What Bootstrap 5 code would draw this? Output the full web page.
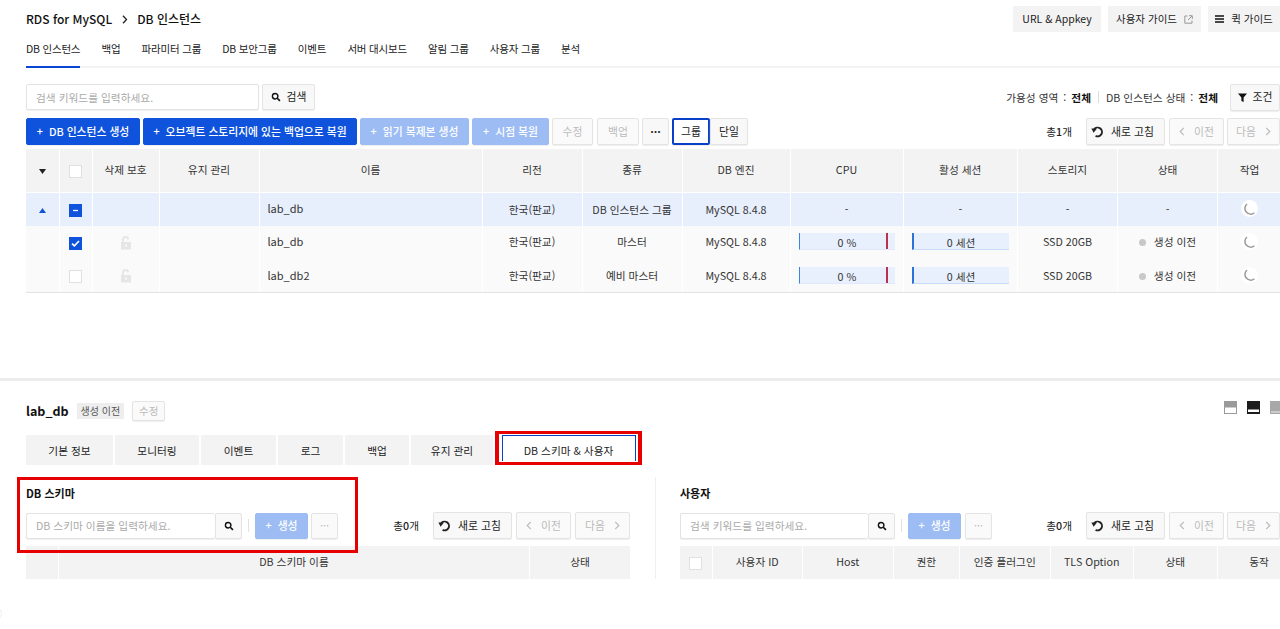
<!DOCTYPE html>
<html lang="ko">
<head>
<meta charset="utf-8">
<title>RDS for MySQL</title>
<link href="https://cdn.jsdelivr.net/npm/bootstrap@5.3.0/dist/css/bootstrap.min.css" rel="stylesheet">
<style>
html,body{height:629px;overflow:hidden}
body{font-family:"Noto Sans CJK KR","Noto Sans",sans-serif;font-size:10.7px;color:#222;background:#fff;line-height:1.4}
.upper{height:381px;border-bottom:3px solid #ececec;padding-left:26px}
.topbar{height:33px;padding-top:6px}
.crumb{font-size:12px;font-weight:500;color:#111;height:26px;margin-top:0}
.crumb svg{margin:0 9px 0 10px}
.topacts{gap:7px}
.gbtn{height:26px;background:#f3f3f3;border:0;border-radius:0;font-size:10.5px;color:#222;padding:0;display:flex;align-items:center;justify-content:center;gap:7px}
.g1{width:88px}.g2{width:93px}.g3{width:72px}
.menubar{height:35px;border-bottom:2px solid #f3f3f3}
.menuitem{display:block;padding-top:9px;height:35px;color:#222;text-decoration:none;margin-right:21.2px;font-size:10.5px;letter-spacing:-.2px}
.menuitem.on{border-bottom:2px solid #0a46d6}
.searchrow{margin-top:16px;height:26px}
.inp{border:1px solid #e3e3e3;border-radius:2px;background:#fff;color:#aaa;font-size:10.7px;height:26px;padding:0 9px;display:flex;align-items:center;box-shadow:0 1px 1px #f0f0f0}
.inp-a{width:233px}.inp-b{width:189px;border-right:0}.inp-c{width:188px;border-right:0}
.tbtn{height:27px;padding:0;font-size:10.8px;border:1px solid #e4e4e4;border-radius:2px;background:#f8f8f8;color:#222;display:inline-flex;align-items:center;justify-content:center;gap:6px;box-shadow:0 1px 1px #eee;flex:none}
.tbtn.pri{background:#0f53dc;border-color:#0f53dc;color:#fff;font-weight:500}
.tbtn.dim{background:#9dbcf4;border-color:#9dbcf4;color:#fff;font-weight:500}
.tbtn.off{color:#bbb;background:#fafafa}
.tbtn.sel{border:2px solid #0a3fc8;background:#fff}
.tbtn.rf{gap:7px;padding-right:6px}
.ml3{margin-left:3px}
.w53{width:53px}.w27{width:27px}.w114{width:114px}.w214{width:214px}.w109{width:109px}.w77{width:77px}.w41{width:41px}.w42{width:42px}.w38{width:38px}.w79{width:79px}.w55{width:55px}.w50{width:50px}.w54{width:54px}.w26{width:26px}
.h26{height:26px}
.dots3{font-weight:700}
.actionrow{margin-top:8px;height:27px}
.filt{margin-right:12px;color:#333}
.filt b{color:#111;font-weight:700}
.colon{margin:0 5px}
.vr1{width:1px;height:12px;background:#ddd;margin:0 7px}
.count{margin-right:14px;color:#222}
.count b{font-weight:500}
.grid{table-layout:fixed;border-collapse:separate;border-spacing:0;margin:0;font-size:10.7px;width:100%;--bs-table-bg:transparent;--bs-table-border-color:transparent}
.grid th,.grid td{padding:0;text-align:center;vertical-align:middle;font-weight:400;color:#333;border:0;border-right:1px solid #fff;box-shadow:none}
.grid th:last-child,.grid td:last-child{border-right:0}
.grid thead th{background:#f3f3f3;height:43.5px;border-bottom:1px solid #fff;padding-bottom:1px}
.grid tbody td{background:#fafafa;height:33.3px;padding-bottom:1px}
.grid tbody tr.hit td{background:#e7effd;padding-bottom:0}
.grid td.lft{text-align:left;padding-left:8px;font-size:11px}
.maingrid{margin-top:4px;border-bottom:1px solid #e2e2e2}
.cx{display:inline-block;width:13px;height:13px;border:1px solid #e0e0e0;background:#fff;vertical-align:middle}
.cx.blue{background:#0f53dc;border-color:#0f53dc}
.cx svg{display:block}
.gauge{display:block;height:17px;background:#e8f0fd;border-left:1px solid #3f83e0;position:relative;line-height:19px;color:#333;width:96px;border-bottom:1px solid #dfe9fb}
.gauge.ses{width:97px;border-left:2px solid #2a73d8;margin-left:8px;border-bottom-color:#c8dbf8}
.gauge::after{content:"";position:absolute}
.gauge.cpu::after{left:86px;top:0;width:2px;height:16px;background:#b8324f}
.gauge.cpu{margin-left:8px}
.dotst{display:inline-block;width:7px;height:7px;border-radius:50%;background:#c8c8c8;margin-right:8px;vertical-align:0}
.spin{display:inline-flex;width:17px;height:17px;border-radius:50%;background:#fff;align-items:center;justify-content:center}
.lower{padding:19px 0 0 26px;position:relative}
.headline{height:22px}
.dbname{font-size:12.5px;font-weight:700;color:#111;margin-right:8px}
.chipst{background:#eee;color:#555;height:16px;padding:0 4px;margin-right:8px;line-height:16px;font-size:10px}
.tbtn.small{height:20px;width:33px;font-size:10.5px}
.lay{display:flex;gap:10px;margin-right:-3px;align-self:flex-start;margin-top:1px}
.lay svg{display:block}
.tabrow{margin-top:13px;height:30px;gap:2px}
.dtab{height:30px;background:#f3f3f3;color:#222;display:flex;align-items:center;justify-content:center;flex:none;text-decoration:none}
.t1{width:87px}.t2{width:84px}.t3{width:75px}.t4{width:65px}.t5{width:64px}.t6{width:82px}
.redtab{flex:none;width:147px;height:34px;margin-top:-4px;border:3px solid #e60000;border-left-width:4px;border-right-width:4px;padding:1px 2.5px 0}
.t7{width:134px;height:26px;padding-top:4px;background:#fff;border:1px solid #0a3fc8;border-bottom:0}
.panes{margin-top:12px}
.pane-l{width:604px;flex:none;height:102px}
.pane-r{width:625px;flex:none;margin-left:25px;border-left:1px solid #f0f0f0;padding-left:24px;height:102px}
.pane-h{font-weight:700;font-size:11px;color:#111;height:35px;padding-top:8px;line-height:16px}
.sbtn{width:27px;height:26px;border:1px solid #e3e3e3;border-radius:2px;background:#f9f9f9;display:flex;align-items:center;justify-content:center;box-shadow:0 1px 1px #f0f0f0;padding:0}
.sep{width:1px;height:13px;background:#e2e2e2;margin:0 6px}
.subgrid{margin-top:7px}
.subgrid thead th{height:32.5px;border-bottom:0}
.c1{width:33.5px}.c2{width:33px}.c3{width:67px}.c4{width:100px}.c5{width:223px}.c6{width:100px}.c7{width:100px}.c8{width:108px}.c9{width:113px}.c10{width:114.5px}.c11{width:100px}.c12{width:100px}.c13{width:63px}
.s1{width:33px}.s3{width:100px}
.u1{width:32.5px}.u2{width:90.5px}.u3{width:90.5px}.u4{width:66.5px}.u5{width:90.5px}.u6{width:83.5px}.u7{width:83px}
.redbox{position:absolute;left:17px;top:96px;width:341px;height:76px;border:3px solid #e60000;pointer-events:none}
.edge{position:fixed;left:-13px;top:606px;width:15px;height:15px;border-radius:50%;border:1px solid #eee;background:#fff}
</style>
</head>
<body>
<svg width="0" height="0" class="position-absolute">
<symbol id="i-search" viewBox="0 0 12 12"><circle cx="5" cy="5" r="3.3" fill="none" stroke="#111" stroke-width="1.7"/><path d="M7.5 7.5l3.2 3.2" stroke="#111" stroke-width="2"/></symbol>
<symbol id="i-refresh" viewBox="0 0 13 13"><path d="M3.2 4.2A4.4 4.4 0 1 1 4.6 10.9" fill="none" stroke="#222" stroke-width="1.9"/><path d="M.4 3.4h5.6L2.6 7.8z" fill="#222"/></symbol>
<symbol id="i-spin" viewBox="0 0 12 12"><path d="M3 1A5 5 0 0 0 10.4 9.8" fill="none" stroke="#999" stroke-width="1.5"/></symbol>
<symbol id="i-lock" viewBox="0 0 12 14"><path d="M3 6V3.8a2.6 2.6 0 0 1 5.2-.4" fill="none" stroke="#e6e6e6" stroke-width="1.8"/><path d="M1 6h10v7.5H1z" fill="#e6e6e6"/><rect x="5.2" y="8.3" width="1.6" height="2.6" fill="#fafafa"/></symbol>
<symbol id="i-prev" viewBox="0 0 6 9"><path d="M4.8 .8L1.2 4.5l3.6 3.7" fill="none" stroke="#bbb" stroke-width="1.2"/></symbol>
<symbol id="i-next" viewBox="0 0 6 9"><path d="M1.2 .8l3.6 3.7-3.6 3.7" fill="none" stroke="#bbb" stroke-width="1.2"/></symbol>
</svg>
<div class="upper">
  <div class="topbar d-flex justify-content-between align-items-start">
    <div class="crumb d-flex align-items-center"><span>RDS for MySQL</span><svg width="6" height="9" viewBox="0 0 6 9"><path d="M1 .8l3.5 3.7L1 8.2" fill="none" stroke="#222" stroke-width="1.3"/></svg><span>DB 인스턴스</span></div>
    <div class="d-flex topacts">
      <button class="gbtn g1" type="button">URL &amp; Appkey</button>
      <button class="gbtn g2" type="button">사용자 가이드 <svg width="9" height="9" viewBox="0 0 9 9"><path d="M3.5 1H.8v7.2H8V5.5M5 .7h3.3V4M8 1L4 5" fill="none" stroke="#999" stroke-width="1"/></svg></button>
      <button class="gbtn g3" type="button"><svg width="9" height="8" viewBox="0 0 9 8"><path d="M0 1h9M0 4h9M0 7h9" stroke="#111" stroke-width="1.5"/></svg>퀵 가이드</button>
    </div>
  </div>
  <nav class="menubar d-flex">
    <a class="menuitem on" href="#">DB 인스턴스</a>
    <a class="menuitem" href="#">백업</a>
    <a class="menuitem" href="#">파라미터 그룹</a>
    <a class="menuitem" href="#">DB 보안그룹</a>
    <a class="menuitem" href="#">이벤트</a>
    <a class="menuitem" href="#">서버 대시보드</a>
    <a class="menuitem" href="#">알림 그룹</a>
    <a class="menuitem" href="#">사용자 그룹</a>
    <a class="menuitem" href="#">분석</a>
  </nav>
  <div class="searchrow d-flex align-items-center">
    <div class="inp inp-a">검색 키워드를 입력하세요.</div>
    <button class="tbtn w53 h26 ml3" type="button"><svg width="10" height="10"><use href="#i-search"/></svg>검색</button>
    <div class="ms-auto d-flex align-items-center filt">가용성 영역<span class="colon">:</span><b>전체</b><span class="vr1"></span>DB 인스턴스 상태<span class="colon">:</span><b>전체</b></div>
    <button class="tbtn w50" type="button"><svg width="9" height="9" viewBox="0 0 9 9"><path d="M0 .5h9L5.6 4.6V9L3.4 8V4.6z" fill="#111"/></svg>조건</button>
  </div>
  <div class="actionrow d-flex align-items-center">
    <button class="tbtn pri w114" type="button">+&nbsp; DB 인스턴스 생성</button>
    <button class="tbtn pri w214 ml3" type="button">+&nbsp; 오브젝트 스토리지에 있는 백업으로 복원</button>
    <button class="tbtn dim w109 ml3" type="button">+&nbsp; 읽기 복제본 생성</button>
    <button class="tbtn dim w77 ml3" type="button">+&nbsp; 시점 복원</button>
    <button class="tbtn off w41 ml3" type="button">수정</button>
    <button class="tbtn off w42 ms-1" type="button">백업</button>
    <button class="tbtn w27 ml3 dots3" type="button">···</button>
    <button class="tbtn sel w38 ml3" type="button">그룹</button>
    <button class="tbtn w38" type="button">단일</button>
    <span class="ms-auto count">총<b>1</b>개</span>
    <button class="tbtn rf w79" type="button"><svg width="13" height="13"><use href="#i-refresh"/></svg>새로 고침</button>
    <button class="tbtn off w55 ms-1" type="button"><svg width="6" height="9"><use href="#i-prev"/></svg>&nbsp;이전</button>
    <button class="tbtn off w53 ml3" type="button">다음&nbsp;<svg width="6" height="9"><use href="#i-next"/></svg></button>
  </div>
  <table class="table grid maingrid">
    <colgroup><col class="c1"><col class="c2"><col class="c3"><col class="c4"><col class="c5"><col class="c6"><col class="c7"><col class="c8"><col class="c9"><col class="c10"><col class="c11"><col class="c12"><col class="c13"></colgroup>
    <thead><tr>
      <th><svg width="7" height="5" viewBox="0 0 7 5"><path d="M0 0h7L3.5 5z" fill="#222"/></svg></th>
      <th><span class="cx"></span></th><th>삭제 보호</th><th>유지 관리</th><th>이름</th><th>리전</th><th>종류</th><th>DB 엔진</th><th>CPU</th><th>활성 세션</th><th>스토리지</th><th>상태</th><th>작업</th>
    </tr></thead>
    <tbody>
      <tr class="hit">
        <td><svg width="7" height="5" viewBox="0 0 7 5"><path d="M0 5h7L3.5 0z" fill="#0f53dc"/></svg></td>
        <td><span class="cx blue"><svg width="11" height="11" viewBox="0 0 11 11"><path d="M3 5.5h5" stroke="#fff" stroke-width="1.3"/></svg></span></td>
        <td></td><td></td><td class="lft">lab_db</td><td>한국(판교)</td><td>DB 인스턴스 그룹</td><td>MySQL 8.4.8</td><td>-</td><td>-</td><td>-</td><td>-</td>
        <td><span class="spin"><svg width="12" height="12"><use href="#i-spin"/></svg></span></td>
      </tr>
      <tr>
        <td></td>
        <td><span class="cx blue"><svg width="11" height="11" viewBox="0 0 11 11"><path d="M2 5.6l2.4 2.2L9 3" fill="none" stroke="#fff" stroke-width="1.6"/></svg></span></td>
        <td><svg width="12" height="14"><use href="#i-lock"/></svg></td><td></td><td class="lft">lab_db</td><td>한국(판교)</td><td>마스터</td><td>MySQL 8.4.8</td>
        <td><span class="gauge cpu">0 %</span></td><td><span class="gauge ses">0 세션</span></td><td>SSD 20GB</td><td><span class="dotst"></span>생성 이전</td>
        <td><span class="spin"><svg width="12" height="12"><use href="#i-spin"/></svg></span></td>
      </tr>
      <tr>
        <td></td>
        <td><span class="cx"></span></td>
        <td><svg width="12" height="14"><use href="#i-lock"/></svg></td><td></td><td class="lft">lab_db2</td><td>한국(판교)</td><td>예비 마스터</td><td>MySQL 8.4.8</td>
        <td><span class="gauge cpu">0 %</span></td><td><span class="gauge ses">0 세션</span></td><td>SSD 20GB</td><td><span class="dotst"></span>생성 이전</td>
        <td><span class="spin"><svg width="12" height="12"><use href="#i-spin"/></svg></span></td>
      </tr>
    </tbody>
  </table>
</div>
<div class="lower">
  <div class="headline d-flex align-items-center">
    <span class="dbname">lab_db</span><span class="chipst">생성 이전</span><button class="tbtn off small" type="button">수정</button>
    <div class="lay ms-auto">
      <svg width="13" height="13" viewBox="0 0 13 13"><rect width="13" height="13" fill="#9a9a9a"/><rect x="1" y="6.5" width="11" height="5.5" fill="#fff"/></svg>
      <svg width="13" height="13" viewBox="0 0 13 13"><rect width="13" height="13" fill="#1c1c1c"/><rect x="1" y="8.5" width="11" height="2.5" fill="#fff"/></svg>
      <svg width="13" height="13" viewBox="0 0 13 13"><rect width="13" height="13" fill="#a8a8a8"/><rect x="1" y="10.5" width="11" height="1" fill="#eee"/></svg>
    </div>
  </div>
  <div class="tabrow d-flex">
    <a class="dtab t1" href="#">기본 정보</a><a class="dtab t2" href="#">모니터링</a><a class="dtab t3" href="#">이벤트</a><a class="dtab t4" href="#">로그</a><a class="dtab t5" href="#">백업</a><a class="dtab t6" href="#">유지 관리</a>
    <div class="redtab"><a class="dtab t7" href="#">DB 스키마 &amp; 사용자</a></div>
  </div>
  <div class="panes d-flex">
    <div class="pane-l">
      <div class="pane-h">DB 스키마</div>
      <div class="d-flex align-items-center">
        <div class="inp inp-b">DB 스키마 이름을 입력하세요.</div>
        <button class="sbtn" type="button"><svg width="10" height="10"><use href="#i-search"/></svg></button>
        <span class="sep"></span>
        <button class="tbtn dim w53 h26" type="button">+&nbsp; 생성</button>
        <button class="tbtn off w27 h26 ml3" type="button">···</button>
        <span class="ms-auto count">총<b>0</b>개</span>
        <button class="tbtn rf w79" type="button"><svg width="13" height="13"><use href="#i-refresh"/></svg>새로 고침</button>
        <button class="tbtn off w55 ms-1" type="button"><svg width="6" height="9"><use href="#i-prev"/></svg>&nbsp;이전</button>
        <button class="tbtn off w55 ms-1" type="button">다음&nbsp;<svg width="6" height="9"><use href="#i-next"/></svg></button>
      </div>
      <table class="table grid subgrid">
        <colgroup><col class="s1"><col><col class="s3"></colgroup>
        <thead><tr><th></th><th>DB 스키마 이름</th><th>상태</th></tr></thead>
      </table>
    </div>
    <div class="pane-r">
      <div class="pane-h">사용자</div>
      <div class="d-flex align-items-center">
        <div class="inp inp-c">검색 키워드를 입력하세요.</div>
        <button class="sbtn" type="button"><svg width="10" height="10"><use href="#i-search"/></svg></button>
        <span class="sep"></span>
        <button class="tbtn dim w53 h26" type="button">+&nbsp; 생성</button>
        <button class="tbtn off w27 h26 ms-1" type="button">···</button>
        <span class="ms-auto count">총<b>0</b>개</span>
        <button class="tbtn rf w79" type="button"><svg width="13" height="13"><use href="#i-refresh"/></svg>새로 고침</button>
        <button class="tbtn off w55 ms-1" type="button"><svg width="6" height="9"><use href="#i-prev"/></svg>&nbsp;이전</button>
        <button class="tbtn off w53 ml3" type="button">다음&nbsp;<svg width="6" height="9"><use href="#i-next"/></svg></button>
      </div>
      <table class="table grid subgrid">
        <colgroup><col class="u1"><col class="u2"><col class="u3"><col class="u4"><col class="u5"><col class="u6"><col class="u6"><col class="u7"></colgroup>
        <thead><tr><th><span class="cx"></span></th><th>사용자 ID</th><th>Host</th><th>권한</th><th>인증 플러그인</th><th>TLS Option</th><th>상태</th><th>동작</th></tr></thead>
      </table>
    </div>
  </div>
  <div class="redbox"></div>
</div>
<div class="edge"></div>
</body>
</html>
